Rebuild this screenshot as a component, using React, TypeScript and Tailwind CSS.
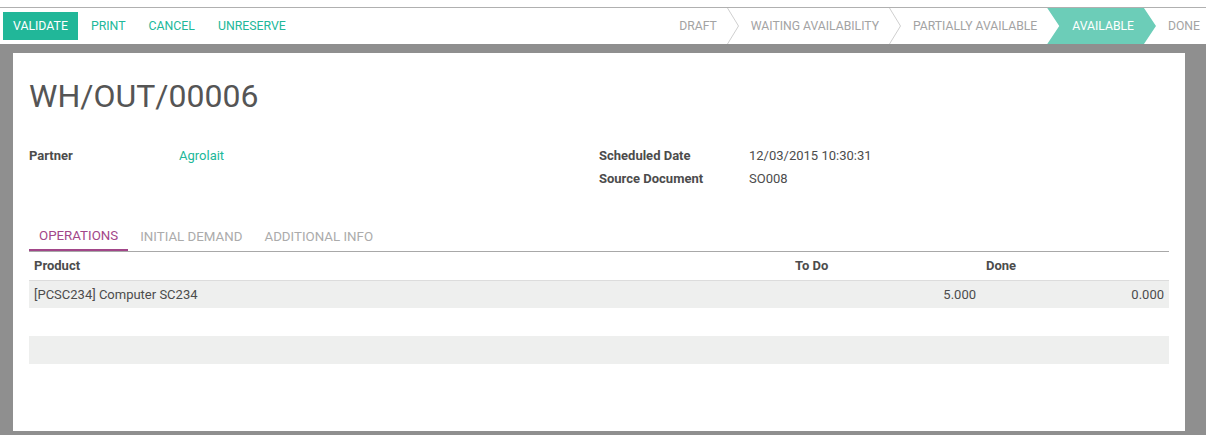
const font = { fontFamily: 'Roboto, "Liberation Sans", sans-serif' };

const Chevron = () => (
  <svg width="12" height="36" viewBox="0 0 12 36" className="shrink-0 ml-[10px] mr-[12px]">
    <polyline points="0.5,0 11.5,18 0.5,36" fill="none" stroke="#cfcfcf" strokeWidth="1" />
  </svg>
);

const actions = ['PRINT', 'CANCEL', 'UNRESERVE'];

export default function App() {
  return (
    <div className="w-[1206px] h-[435px] bg-white overflow-hidden text-[13px] text-[#4c4c4c]" style={font}>
      <div className="h-[7px] bg-white" />
      <div className="h-[37px] border-t border-[#b0b0b0] flex items-stretch justify-between">
        <div className="flex items-center gap-[3px] pl-[3px] text-[12.3px]">
          <button className="h-[28px] px-[10px] bg-[#21b799] text-white">VALIDATE</button>
          {actions.map((a) => (
            <button key={a} className="h-[28px] px-[10px] text-[#21b799]">{a}</button>
          ))}
        </div>
        <div className="flex items-center pr-[6px] text-[#a3a3a3] text-[12.2px]">
          <span>DRAFT</span>
          <Chevron />
          <span>WAITING AVAILABILITY</span>
          <Chevron />
          <span className="mr-[10px]">PARTIALLY AVAILABLE</span>
          <span className="h-[36px] flex items-center pl-[25px] pr-[22px] bg-[#6ccdb8] text-white [clip-path:polygon(0_0,calc(100%-12px)_0,100%_50%,calc(100%-12px)_100%,0_100%,12px_50%)]">
            AVAILABLE
          </span>
          <span className="ml-[12px]">DONE</span>
        </div>
      </div>
      <div className="bg-[#8f8f8f] h-[391px] pt-[9px] pl-[13px]">
        <div className="w-[1172px] h-[378px] bg-white px-[16px] pt-[22px]">
          <h1 className="text-[32px] leading-[42px] text-[#555555]">WH/OUT/00006</h1>
          <div className="mt-[27px] grid grid-cols-2">
            <div className="flex flex-col">
              <div className="flex h-[23px] items-center">
                <span className="w-[150px] font-bold">Partner</span>
                <span className="text-[#21b799]">Agrolait</span>
              </div>
            </div>
            <div className="flex flex-col">
              <div className="flex h-[23px] items-center">
                <span className="w-[150px] font-bold">Scheduled Date</span>
                <span>12/03/2015 10:30:31</span>
              </div>
              <div className="flex h-[23px] items-center">
                <span className="w-[150px] font-bold">Source Document</span>
                <span>SO008</span>
              </div>
            </div>
          </div>
          <div className="mt-[33px] flex gap-[2px] border-b border-[#a8a8a8] text-[13.3px]">
            <div className="h-[28px] px-[10px] flex items-center text-[#a24689] border-b-2 border-[#a24689] -mb-[1px]">OPERATIONS</div>
            <div className="h-[28px] px-[10px] flex items-center text-[#ababab]">INITIAL DEMAND</div>
            <div className="h-[28px] px-[10px] flex items-center text-[#ababab]">ADDITIONAL INFO</div>
          </div>
          <table className="w-full border-collapse">
            <thead>
              <tr className="h-[28px] border-b border-[#dcdcdc] font-bold">
                <td className="w-[761px] px-[5px]">Product</td>
                <td className="w-[191px] px-[5px]">To Do</td>
                <td className="px-[5px]">Done</td>
              </tr>
            </thead>
            <tbody>
              <tr className="h-[28px] bg-[#eeefee]">
                <td className="px-[5px]">[PCSC234] Computer SC234</td>
                <td className="px-[5px] text-right">5.000</td>
                <td className="px-[5px] text-right">0.000</td>
              </tr>
              <tr className="h-[28px]"><td colSpan={3} /></tr>
              <tr className="h-[28px] bg-[#eeefee]"><td colSpan={3} /></tr>
            </tbody>
          </table>
        </div>
      </div>
    </div>
  );
}
